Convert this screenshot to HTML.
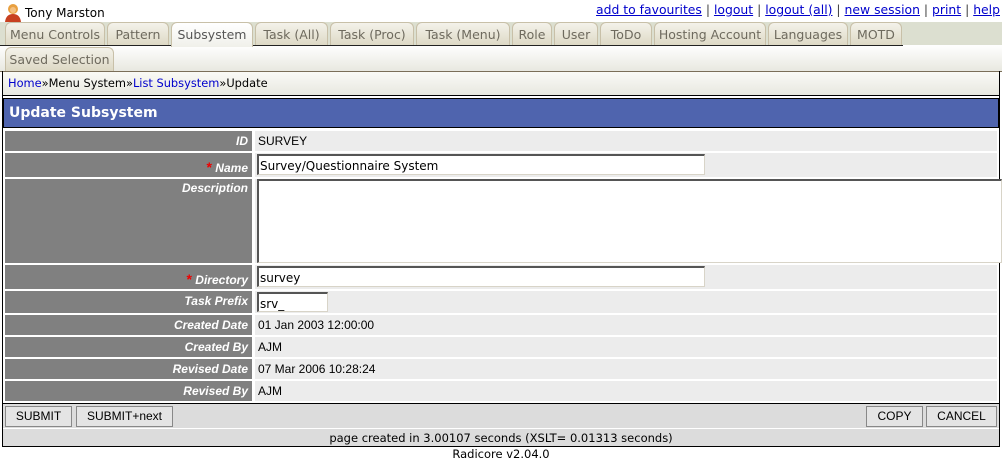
<!DOCTYPE html>
<html><head><meta charset="utf-8"><style>
*{margin:0;padding:0;box-sizing:border-box}
body{width:1002px;height:461px;background:#fff;position:relative;overflow:hidden;font-family:"DejaVu Sans",Verdana,sans-serif;font-size:12px}
.a{position:absolute}
.tab{position:absolute;height:24px;border:1px solid #c8c0a8;border-bottom:none;border-radius:6px 6px 0 0;background:linear-gradient(#f4f2ea,#ddd8c4);color:#6e6a5e;font-size:12.5px;line-height:24px;text-align:center;white-space:nowrap}
.tab.on{background:linear-gradient(#fff,#f0f0ea);color:#555}
.lab{position:absolute;left:5px;width:247px;background:#808080;color:#fff;font:italic bold 12px "Liberation Sans",Arial,sans-serif;text-align:right;padding-right:4px}
.val{position:absolute;left:255px;width:742px;background:#ececec;font:12px "Liberation Sans",Arial,sans-serif;color:#000;padding-left:3px}
.inp{position:absolute;background:#fff;border:1px solid #d8d4c8;border-top:2px solid #555;border-left:2px solid #555;font:12px "DejaVu Sans",Verdana,sans-serif;padding-left:1px;padding-top:2px;line-height:17px;overflow:hidden}
.btn{position:absolute;top:406px;height:21px;border:1px solid #888;background:#e4e4e4;font:12px "Liberation Sans",Arial,sans-serif;line-height:19px;text-align:center}
.req{color:#e00;font-style:normal;font-size:14px}
a{color:#00c}
</style></head><body>
<svg class="a" style="left:3px;top:2px" width="20" height="20" viewBox="0 0 20 20"><circle cx="10" cy="7" r="5" fill="#e8a040"/><path d="M2 20 Q3 12 10 12 Q17 12 18 20Z" fill="#c84020"/><circle cx="10" cy="8" r="3" fill="#f4c080"/></svg>
<div class="a" style="left:25px;top:6px;font-size:12px;color:#000">Tony Marston</div>
<div class="a" style="right:2px;top:2px;font-size:12.4px;color:#444;white-space:nowrap"><a href="#">add to favourites</a> | <a href="#">logout</a> | <a href="#">logout (all)</a> | <a href="#">new session</a> | <a href="#">print</a> | <a href="#">help</a></div>
<div class="a" style="left:0;top:22px;width:1002px;height:23px;background:#dcdfd0"></div>
<div class="a" style="left:0;top:45px;width:1002px;height:26px;background:linear-gradient(#fff,#e8e8e0)"></div>
<div class="tab" style="left:5px;top:22px;width:100px">Menu Controls</div>
<div class="tab" style="left:107px;top:22px;width:62px">Pattern</div>
<div class="tab on" style="left:171px;top:22px;width:82px;height:25px">Subsystem</div>
<div class="tab" style="left:255px;top:22px;width:73px">Task (All)</div>
<div class="tab" style="left:330px;top:22px;width:84px">Task (Proc)</div>
<div class="tab" style="left:416px;top:22px;width:94px">Task (Menu)</div>
<div class="tab" style="left:512px;top:22px;width:40px">Role</div>
<div class="tab" style="left:554px;top:22px;width:44px">User</div>
<div class="tab" style="left:600px;top:22px;width:52px">ToDo</div>
<div class="tab" style="left:654px;top:22px;width:112px">Hosting Account</div>
<div class="tab" style="left:768px;top:22px;width:80px">Languages</div>
<div class="tab" style="left:850px;top:22px;width:52px">MOTD</div>
<div class="a" style="left:0;top:45px;width:171px;height:1px;background:#222"></div>
<div class="a" style="left:253px;top:45px;width:650px;height:1px;background:#222"></div>
<div class="tab" style="left:5px;top:47px;width:109px">Saved Selection</div>
<div class="a" style="left:0;top:71px;width:1002px;height:1px;background:#7a6e58"></div>
<div class="a" style="left:2px;top:71px;width:998px;height:376px;border:1px solid #000;border-top:none"></div>
<div class="a" style="left:3px;top:72px;width:996px;height:24px;background:linear-gradient(#fafaf6,#e8e8e0);font-size:11.4px;line-height:22px;padding-left:5px;border-bottom:1px solid #000;white-space:nowrap"><a href="#" style="text-decoration:none">Home</a>»Menu System»<a href="#" style="text-decoration:none">List Subsystem</a>»Update</div>
<div class="a" style="left:3px;top:98px;width:996px;height:30px;background:#4f64ae;border:1px solid #000;color:#fff;font:bold 14px 'DejaVu Sans',Verdana,sans-serif;line-height:28px;padding-left:5px">Update Subsystem</div>
<div class="lab" style="top:131px;height:20px;line-height:20px">ID</div><div class="val" style="top:131px;height:20px;line-height:20px">SURVEY</div>
<div class="lab" style="top:153px;height:24px;line-height:28px"><span class="req">*</span> Name</div><div class="val" style="top:153px;height:24px"></div>
<div class="inp" style="left:257px;top:154px;width:448px;height:21px">Survey/Questionnaire System</div>
<div class="lab" style="top:179px;height:84px;line-height:18px">Description</div><div class="val" style="top:179px;height:84px"></div>
<div class="inp" style="left:257px;top:179px;width:745px;height:84px"></div>
<div class="lab" style="top:265px;height:24px;line-height:28px"><span class="req">*</span> Directory</div><div class="val" style="top:265px;height:24px"></div>
<div class="inp" style="left:257px;top:266px;width:448px;height:21px">survey</div>
<div class="lab" style="top:291px;height:22px;line-height:20px">Task Prefix</div><div class="val" style="top:291px;height:22px"></div>
<div class="inp" style="left:257px;top:292px;width:71px;height:20px">srv_</div>
<div class="lab" style="top:315px;height:20px;line-height:20px">Created Date</div><div class="val" style="top:315px;height:20px;line-height:20px">01 Jan 2003 12:00:00</div>
<div class="lab" style="top:337px;height:20px;line-height:20px">Created By</div><div class="val" style="top:337px;height:20px;line-height:20px">AJM</div>
<div class="lab" style="top:359px;height:20px;line-height:20px">Revised Date</div><div class="val" style="top:359px;height:20px;line-height:20px">07 Mar 2006 10:28:24</div>
<div class="lab" style="top:381px;height:20px;line-height:20px">Revised By</div><div class="val" style="top:381px;height:20px;line-height:20px">AJM</div>
<div class="a" style="left:3px;top:403px;width:996px;height:1px;background:#000"></div>
<div class="a" style="left:3px;top:404px;width:996px;height:24px;background:#dcdcdc"></div>
<div class="btn" style="left:5px;width:67px">SUBMIT</div>
<div class="btn" style="left:76px;width:97px">SUBMIT+next</div>
<div class="btn" style="left:866px;width:57px">COPY</div>
<div class="btn" style="left:926px;width:71px">CANCEL</div>
<div class="a" style="left:3px;top:428px;width:996px;height:18px;background:#dcdcdc;border-top:1px solid #fff;text-align:center;font-size:11.5px;line-height:18px">page created in 3.00107 seconds (XSLT= 0.01313 seconds)</div>
<div class="a" style="left:0;top:446px;width:1002px;text-align:center;font-size:11.5px;line-height:16px">Radicore v2.04.0</div>
</body></html>
